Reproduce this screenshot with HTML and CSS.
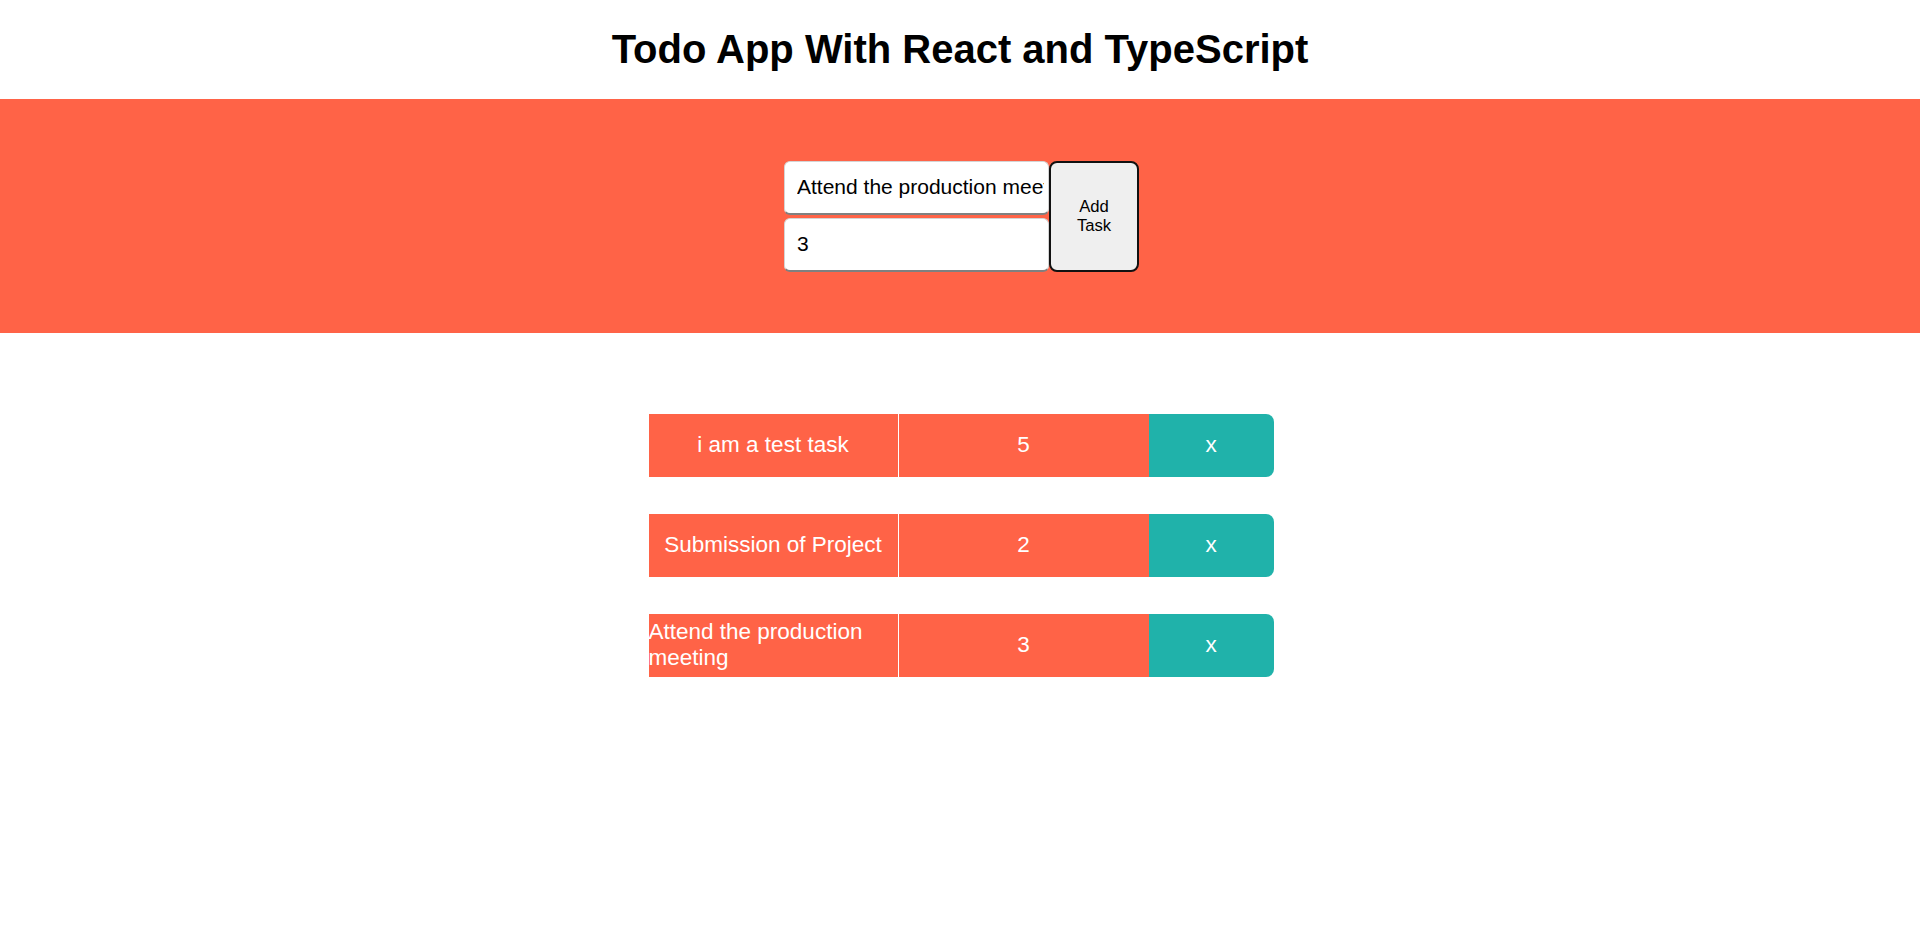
FILE: index.html
```html
<!DOCTYPE html>
<html lang="en">
<head>
<meta charset="utf-8">
<title>Todo App</title>
<link rel="stylesheet" href="styles.css">
</head>
<body>
  <h1 class="title">Todo App With React and TypeScript</h1>
  <header class="header">
    <form class="form">
      <div class="fields">
        <input class="field" type="text" value="Attend the production meeting">
        <input class="field" type="number" value="3">
      </div>
      <button class="add-btn" type="button">Add Task</button>
    </form>
  </header>
  <main class="list">
    <div class="row">
      <div class="cell cell-name"><span>i am a test task</span></div>
      <div class="cell cell-num"><span>5</span></div>
      <button class="del-btn" type="button">x</button>
    </div>
    <div class="row">
      <div class="cell cell-name"><span>Submission of Project</span></div>
      <div class="cell cell-num"><span>2</span></div>
      <button class="del-btn" type="button">x</button>
    </div>
    <div class="row">
      <div class="cell cell-name"><span>Attend the production meeting</span></div>
      <div class="cell cell-num"><span>3</span></div>
      <button class="del-btn" type="button">x</button>
    </div>
  </main>
</body>
</html>
```

FILE: styles.css
```css
html, body {
  margin: 0;
  padding: 0;
  background: #ffffff;
  font-family: "Liberation Sans", Arial, sans-serif;
}

.title {
  margin: 27px 0;
  font-size: 40px;
  line-height: 45px;
  font-weight: bold;
  text-align: center;
  color: #000;
}

.header {
  height: 234px;
  background: #ff6347;
  display: flex;
  align-items: center;
  justify-content: center;
}

.form {
  display: flex;
  align-items: center;
  margin-left: 3px;
}

.fields {
  display: flex;
  flex-direction: column;
  gap: 3px;
}

.field {
  box-sizing: border-box;
  width: 265px;
  height: 54px;
  margin: 0;
  padding: 0 4px 0 12px;
  font-family: "Liberation Sans", Arial, sans-serif;
  font-size: 21px;
  color: #000;
  background: #fff;
  border: 1px solid #d4d4d4;
  border-bottom: 2px solid #808080;
  border-radius: 6px;
  outline: none;
  -moz-appearance: textfield;
  appearance: textfield;
}

.field::-webkit-outer-spin-button,
.field::-webkit-inner-spin-button {
  -webkit-appearance: none;
  margin: 0;
}

.add-btn {
  box-sizing: border-box;
  width: 90px;
  height: 111px;
  margin: 0;
  padding: 0 12px;
  background: #efefef;
  border: 2px solid #111;
  border-radius: 8px;
  font-family: "Liberation Sans", Arial, sans-serif;
  font-size: 16.67px;
  color: #000;
  line-height: 1.15;
}

.list {
  display: flex;
  flex-direction: column;
  align-items: center;
  gap: 37.5px;
  padding-top: 81px;
}

.row {
  display: flex;
  width: 625px;
  height: 62.5px;
  margin-left: 2px;
}

.cell {
  box-sizing: border-box;
  width: 250px;
  height: 100%;
  display: flex;
  align-items: center;
  justify-content: center;
  background: #ff6347;
  color: #fff;
  font-size: 22.5px;
}

.cell-name {
  border-right: 1px solid #fff;
}

.del-btn {
  width: 125px;
  height: 100%;
  margin: 0;
  padding: 0;
  border: none;
  background: #20b2aa;
  color: #fff;
  font-family: "Liberation Sans", Arial, sans-serif;
  font-size: 22.5px;
  border-radius: 0 8px 8px 0;
}
```
